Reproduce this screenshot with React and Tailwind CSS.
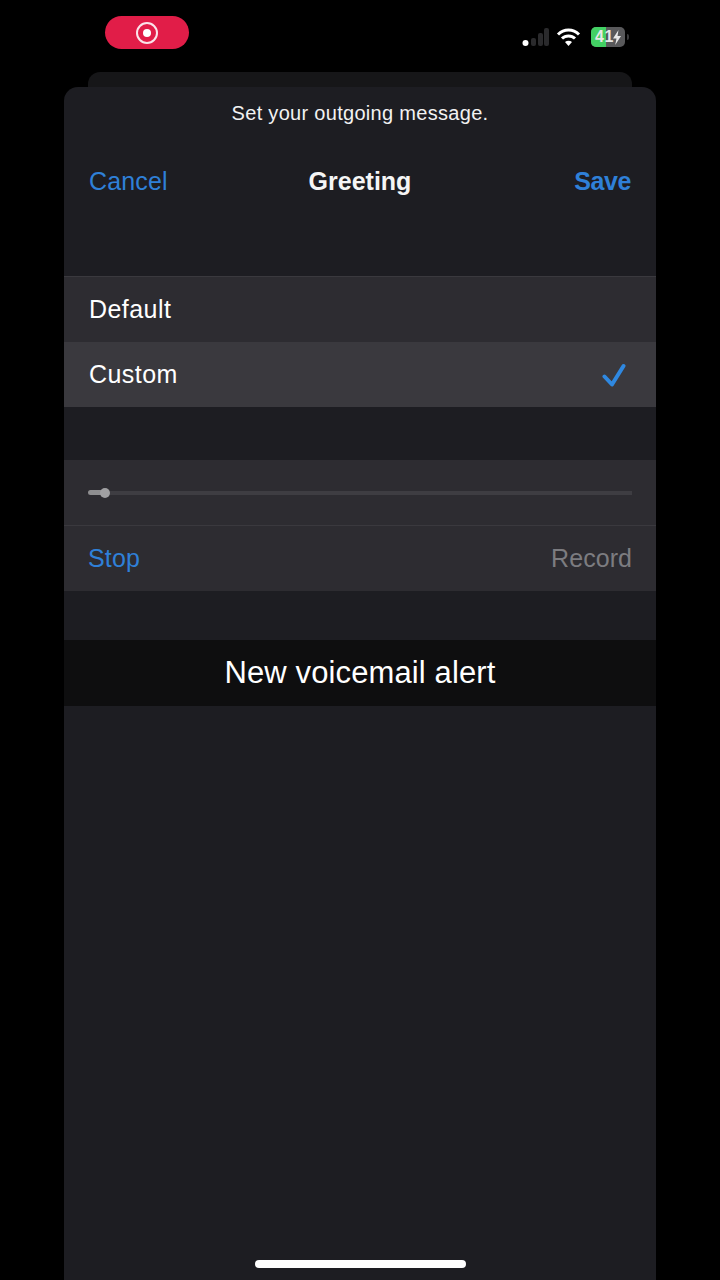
function StatusBar() {
  return (
    <div className="flex h-[72px] items-start justify-between pl-[105px] pr-[91px]">
      <div className="mt-4 flex h-[33px] w-[84px] items-center justify-center rounded-full bg-[#e11d48]">
        <div className="flex h-[22px] w-[22px] items-center justify-center rounded-full border-2 border-[#fbe4ea]">
          <div className="h-2 w-2 rounded-full bg-white" />
        </div>
      </div>
      <div className="mt-[27px] flex items-center">
        <svg width="28" height="20" viewBox="0 0 28 20">
          <circle cx="3.5" cy="16" r="3" fill="#fff" />
          <rect x="9" y="11" width="5" height="8" rx="2" fill="#2a2a2c" />
          <rect x="16" y="6" width="5" height="13" rx="2" fill="#2a2a2c" />
          <rect x="22" y="1" width="5" height="18" rx="2" fill="#2a2a2c" />
        </svg>
        <svg className="ml-[6px]" width="25" height="20" viewBox="0 0 24 20" fill="none" stroke="#fff" strokeWidth="3">
          <path d="M1.5 7.5 C7.5 1.5 16.5 1.5 22.5 7.5" />
          <path d="M5.5 11.5 C9 8 15 8 18.5 11.5" />
          <path d="M12 19 L8.5 15 C10.5 13.3 13.5 13.3 15.5 15 Z" fill="#fff" stroke="none" />
        </svg>
        <div className="ml-[10px] flex items-center gap-[2px]">
          <div className="relative flex h-[20px] w-[34px] items-center overflow-hidden rounded-[5px] bg-[#59595b]">
            <div className="h-full w-[15px] bg-[#43d164]" />
            <span className="absolute left-[4px] text-[16px] font-bold leading-[22px] tracking-[0.5px] text-[#e8e8e8]">41</span>
            <svg className="absolute right-[3px]" width="10" height="15" viewBox="0 0 10 15">
              <path d="M6.5 0 L1 8.5 H4.5 L3.2 15 L9 6 H5.5 Z" fill="#e8e8e8" />
            </svg>
          </div>
          <div className="h-[6px] w-[2px] rounded-r-sm bg-[#3a3a3c]" />
        </div>
      </div>
    </div>
  );
}

export default function App() {
  return (
    <div className="relative flex h-[1280px] w-[720px] flex-col overflow-hidden bg-black font-['Liberation_Sans',sans-serif] text-white">
      <StatusBar />
      <div className="mx-[88px] h-[15px] rounded-t-xl bg-[#161618]" />
      <div className="mx-16 flex flex-1 flex-col rounded-t-[14px] bg-[#1d1d22]">
        <div className="pt-[13px] text-center text-[20px] leading-[26px] tracking-[0.3px] text-[#f2f2f2]">
          Set your outgoing message.
        </div>
        <div className="mt-[39px] grid grid-cols-3 items-center px-[25px] text-[25px] leading-[32px]">
          <span className="tracking-[0.15px] text-[#2f80d8]">Cancel</span>
          <span className="text-center font-bold text-[#f5f5f5]">Greeting</span>
          <span className="text-right font-bold tracking-[-0.4px] text-[#2f80d8]">Save</span>
        </div>
        <div className="mt-[79px] border-t border-[#3a393e] tracking-[0.45px]">
          <div className="flex h-[65px] items-center bg-[#2d2c31] px-[25px] text-[25px]">Default</div>
          <div className="flex h-[65px] items-center justify-between bg-[#3a393e] pl-[25px] pr-[30px] text-[25px]">
            Custom
            <svg width="24" height="24" viewBox="0 0 24 24" fill="none" stroke="#2f88e0" strokeWidth="4" strokeLinecap="round" strokeLinejoin="round">
              <path d="M2.5 13.5 L10 21.5 L21.5 3" />
            </svg>
          </div>
        </div>
        <div className="mt-[53px] bg-[#2d2c31]">
          <div className="flex h-[66px] items-center border-b border-[#3a393e] px-6">
            <div className="h-[5px] w-[18px] rounded-full bg-[#8e8e90]" />
            <div className="-ml-[6px] h-[10px] w-[10px] rounded-full bg-[#a0a0a2]" />
            <div className="h-[4px] flex-1 bg-[#3e3d42]" />
          </div>
          <div className="flex h-[65px] items-center justify-between px-6 text-[25px]">
            <span className="tracking-[0.15px] text-[#2f80d8]">Stop</span>
            <span className="tracking-[0.05px] text-[#7c7c80]">Record</span>
          </div>
        </div>
        <div className="mt-[49px] flex h-[66px] items-center justify-center bg-[#0e0e0f] text-[31px] tracking-[0.12px]">
          New voicemail alert
        </div>
      </div>
      <div className="absolute bottom-3 left-[255px] h-2 w-[211px] rounded-full bg-white" />
    </div>
  );
}
